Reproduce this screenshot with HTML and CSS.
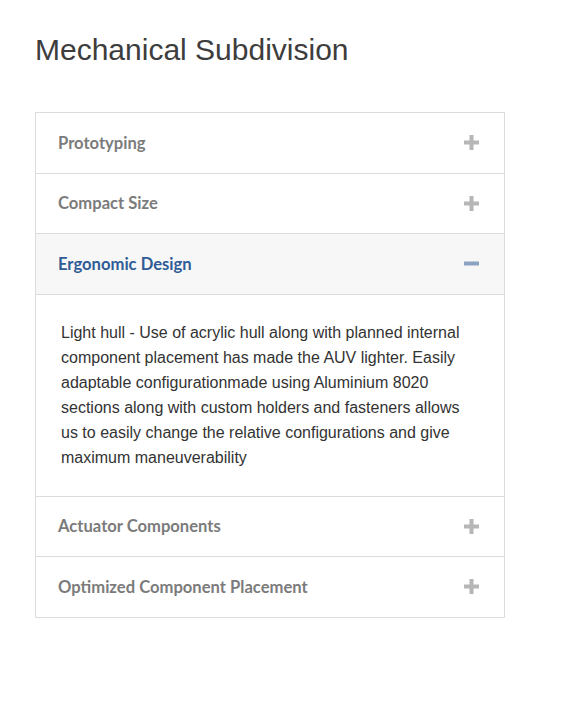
FILE: index.html
```html
<!DOCTYPE html>
<html lang="en">
  <head>
    <meta charset="UTF-8" />
    <meta name="viewport" content="width=device-width, initial-scale=1.0" />
    <title>Mechanical Subdivision</title>
    <link rel="stylesheet" href="styles.css">
  </head>
  <body>
    <section class="subdivision">
      <h1 class="title">Mechanical Subdivision</h1>

      <div class="accordion">
        <div class="panel">
          <div class="panel-head">
            <span class="panel-title">Prototyping</span>
            <svg class="toggle" width="15" height="15" viewBox="0 0 15 15"><rect x="0" y="5.5" width="15" height="4" /><rect x="5.5" y="0" width="4" height="15" /></svg>
          </div>
        </div>
        <div class="panel">
          <div class="panel-head">
            <span class="panel-title">Compact Size</span>
            <svg class="toggle" width="15" height="15" viewBox="0 0 15 15"><rect x="0" y="5.5" width="15" height="4" /><rect x="5.5" y="0" width="4" height="15" /></svg>
          </div>
        </div>
        <div class="panel open">
          <div class="panel-head">
            <span class="panel-title">Ergonomic Design</span>
            <svg class="toggle" width="15" height="15" viewBox="0 0 15 15"><rect x="0" y="5.5" width="15" height="4" /></svg>
          </div>
          <div class="panel-body">
            <p>Light hull - Use of acrylic hull along with planned internal component placement has made the AUV lighter. Easily adaptable configurationmade using Aluminium 8020 sections along with custom holders and fasteners allows us to easily change the relative configurations and give maximum maneuverability</p>
          </div>
        </div>
        <div class="panel">
          <div class="panel-head">
            <span class="panel-title">Actuator Components</span>
            <svg class="toggle" width="15" height="15" viewBox="0 0 15 15"><rect x="0" y="5.5" width="15" height="4" /><rect x="5.5" y="0" width="4" height="15" /></svg>
          </div>
        </div>
        <div class="panel">
          <div class="panel-head">
            <span class="panel-title">Optimized Component Placement</span>
            <svg class="toggle" width="15" height="15" viewBox="0 0 15 15"><rect x="0" y="5.5" width="15" height="4" /><rect x="5.5" y="0" width="4" height="15" /></svg>
          </div>
        </div>
      </div>
    </section>
  </body>
</html>
```

FILE: styles.css
```css
body {
  margin: 0;
  background: #fff;
  font-family: "Liberation Sans", Arial, sans-serif;
}
.subdivision {
  padding: 33px 35px;
  width: 470px;
}
.title {
  margin: 0 0 45px;
  font-size: 30px;
  font-weight: normal;
  line-height: 34px;
  color: #3d3d3d;
}
.accordion {
  border: 1px solid #dcdcdc;
}
.panel + .panel {
  border-top: 1px solid #dcdcdc;
}
.panel-head {
  height: 59.5px;
  padding: 0 25px 0 22px;
  display: flex;
  align-items: center;
  justify-content: space-between;
}
.panel-title {
  font-family: Lato, "Noto Sans", sans-serif;
  font-weight: bold;
  font-size: 16.6px;
  color: #7b7b7b;
}
.toggle {
  fill: #b6b6b6;
}
.open .panel-head {
  background: #f7f7f7;
  border-bottom: 1px solid #dcdcdc;
}
.open .panel-title {
  color: #2f5c96;
}
.open .toggle {
  fill: #8ba2c3;
}
.panel-body {
  padding: 25px 30px 26px 25px;
}
.panel-body p {
  margin: 0;
  font-size: 16px;
  line-height: 25px;
  color: #333;
}
```
